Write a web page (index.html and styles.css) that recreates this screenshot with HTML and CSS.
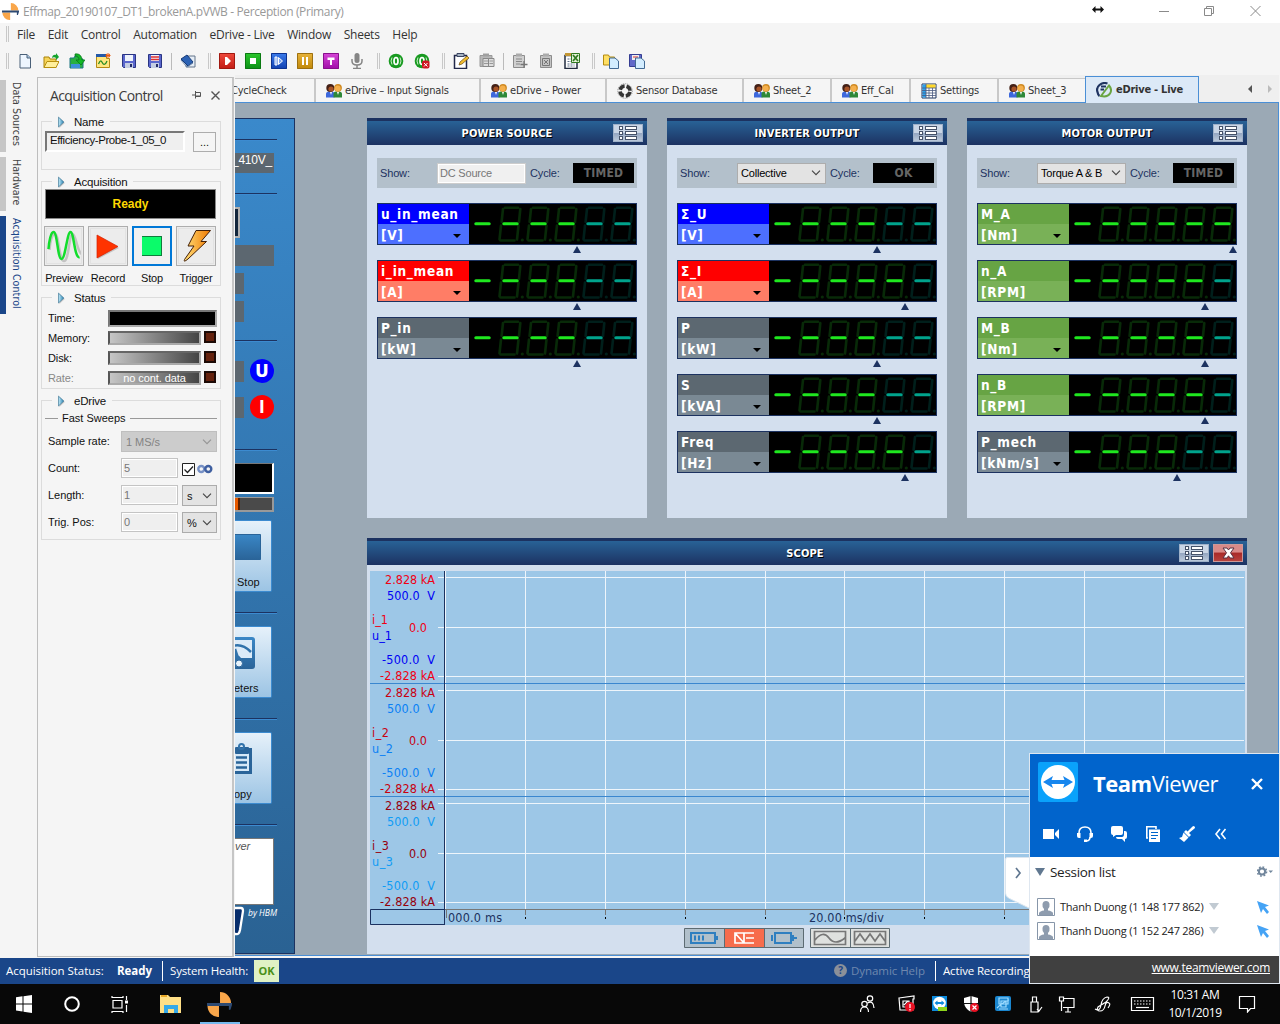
FILE: index.html
```html
<!DOCTYPE html>
<html lang="en">
<head>
<meta charset="utf-8">
<title>Effmap_20190107_DT1_brokenA.pVWB - Perception (Primary)</title>
<link rel="stylesheet" href="styles.css">
</head>
<body>
<svg class="sprite" width="0" height="0">
  <defs>
    <linearGradient id="play" x1="0" x2="1"><stop offset="0" stop-color="#c4ecfa"/><stop offset="1" stop-color="#2580b0"/></linearGradient>
    <linearGradient id="bolt" x1="0" x2="1"><stop offset="0" stop-color="#ffe07a"/><stop offset="1" stop-color="#f07800"/></linearGradient>
    <linearGradient id="ink" x1="0" y1="0" x2="0" y2="1"><stop offset="0" stop-color="#3a87c6"/><stop offset="1" stop-color="#2a6499"/></linearGradient>
  </defs>
  <symbol id="logo" viewBox="0 0 24 24"><path d="M12.500 0a10.500 10.500 0 0 1 10.500 10.500H12.500zM11.500 24A10.500 10.500 0 0 1 .5 13.500H11.500z" fill="#f9a64a"/><path d="M0 10.500h24v2L22.500 17H21v-3.500H0z" fill="#2d4a73"/></symbol>
  <symbol id="page" viewBox="0 0 16 16"><path d="M3 1.500h7l3.500 3.500v10H3z" fill="#eef6ff" stroke="#4a6078"/><path d="M10 1.500V5h3.500" fill="#a9c7e4" stroke="#4a6078"/></symbol>
  <symbol id="folder" viewBox="0 0 16 16"><path d="M1 14.500V4h5l1 2h6v8.500z" fill="#f6d458" stroke="#a98208"/><path d="M1 14.500L4 8.500h12l-3 6z" fill="#ffef9c" stroke="#b8900f"/><path d="M9 5c0-3 3-4 4-3V0l3 4-3 3V5c-1-1-3-1-4 0z" fill="#14a32c"/></symbol>
  <symbol id="import" viewBox="0 0 16 16"><path d="M1 15V5h4l1-2h5l1 3h2v9z" fill="#28b040" stroke="#1c7480"/><path d="M6 1c5-1 7 3 7 6h3l-4 5-5-5h3c0-3-2-4-4-4z" fill="#12b824" stroke="#087018" stroke-width=".7"/><path d="M2 11h9v4H2z" fill="#3d90d8"/></symbol>
  <symbol id="wavefolder" viewBox="0 0 16 16"><path d="M1.500 1.500h10v4h3v9h-13z" fill="#ffe680" stroke="#b58a14"/><path d="M1 1h10v3H1z" fill="#2459a8"/><path d="M3.500 11c2-5 3-3 4-1s3 2 4.500-2" fill="none" stroke="#278b25" stroke-width="1.300"/><path d="M13 0v5M10.500 2.500h5M11 1l4 3M15 1l-4 3" stroke="#e85a10"/></symbol>
  <symbol id="save" viewBox="0 0 16 16"><path d="M1.500 1.500h13v13h-12l-1-1z" fill="#5a66cc" stroke="#293483"/><path d="M4 2h8v6H4z" fill="#eef3fb"/><path d="M4 10h8v5H4z" fill="#c4cde2"/><path d="M9 11h2v3H9z" fill="#222b66"/></symbol>
  <symbol id="saveas" viewBox="0 0 16 16"><use href="#save"/><path d="M4 4h8M4 6.500h8" stroke="#e23131" stroke-width="1.300"/></symbol>
  <symbol id="book" viewBox="0 0 16 16"><path d="M7 3h8v11H6z" fill="#e6edf5" stroke="#62758a"/><path d="M1 6l6-4 6 7-5 4z" fill="#2c62b4" stroke="#163a78"/><path d="M1 7l6 7 6-4" fill="none" stroke="#6382ad"/></symbol>
  <symbol id="bplay" viewBox="0 0 16 16"><path d="M6 4h2l4 4-4 4H6z" fill="#fff"/></symbol>
  <symbol id="bstop" viewBox="0 0 16 16"><path d="M5 5h6v6H5z" fill="#fff"/></symbol>
  <symbol id="bstep" viewBox="0 0 16 16"><path d="M4 4h2v8H4zM7.500 4.500l4 3.500-4 3.500z" fill="#7ba4ee" stroke="#fff"/></symbol>
  <symbol id="bpause" viewBox="0 0 16 16"><path d="M5 4h2v8H5zM9 4h2v8H9z" fill="#fff"/></symbol>
  <symbol id="btrig" viewBox="0 0 16 16"><path d="M4.500 4.500h7V7H9v5H7V7H4.500z" fill="#fff"/></symbol>
  <symbol id="mic" viewBox="0 0 16 16"><rect x="5.500" y="0" width="5" height="10" rx="2.500" fill="#858585"/><path d="M3 6v2q0 4 5 4t5-4V6M8 12v3M4 15.500h8" fill="none" stroke="#858585" stroke-width="1.500"/></symbol>
  <symbol id="zero" viewBox="0 0 16 16"><circle cx="8" cy="8" r="7.300" fill="#189a20"/><ellipse cx="8" cy="8" rx="2" ry="3.500" fill="none" stroke="#fff" stroke-width="1.700"/><path d="M4 4.500Q2 8 4 11.500M12 4.500q2 3.500 0 7" stroke="#c8efc8" fill="none"/></symbol>
  <symbol id="zerox" viewBox="0 0 16 16"><use href="#zero"/><rect x="8" y="7.500" width="7.500" height="8" rx="2" fill="#cf1522"/><path d="M10 10l3.500 3.500M13.500 10L10 13.500" stroke="#fff"/></symbol>
  <symbol id="clipedit" viewBox="0 0 16 16"><path d="M1.500 2.500h12v13h-12z" fill="#fff" stroke="#22284a" stroke-width="1.500"/><path d="M4 .5h7v3H4z" fill="#a5b2c2" stroke="#3a4460"/><path d="M6 12l1-3 7-6 2 2-7 6z" fill="#f2bd30" stroke="#6a4a10" stroke-width=".7"/></symbol>
  <symbol id="clipgrey" viewBox="0 0 16 16"><path d="M1.500 2.500h11v12h-11z" fill="#d0d0d0" stroke="#8c8c8c"/><path d="M4 .5h6v3H4z" fill="#ababab"/><path d="M4 6h6M4 8.500h6M4 11h4" stroke="#888"/></symbol>
  <symbol id="clipbook" viewBox="0 0 16 16"><path d="M1 2.500h12v11H1z" fill="#b7b7b7" stroke="#999"/><path d="M4 .5h6v3H4z" fill="#a0a0a0"/><path d="M4 5.500h5.500v8H4zM9.500 5.500H15v8H9.500z" fill="#ddd" stroke="#888"/><path d="M5 8h4M10.500 8H14M5 10.500h4M10.500 10.500H14" stroke="#999"/></symbol>
  <symbol id="clipplus" viewBox="0 0 16 16"><use href="#clipgrey"/><path d="M12 8v7M8.500 11.500h7" stroke="#777" stroke-width="1.300"/></symbol>
  <symbol id="clipx" viewBox="0 0 16 16"><path d="M2.500 2.500h11v12h-11z" fill="#c4c4c4" stroke="#8c8c8c"/><path d="M5 .5h6v3H5z" fill="#ababab"/><path d="M4.500 5.500h7v7h-7zM6 7l4 4M10 7l-4 4" fill="none" stroke="#777"/></symbol>
  <symbol id="clipxls" viewBox="0 0 16 16"><path d="M1 2.500h12v13H1z" fill="#fff" stroke="#222c40" stroke-width="1.500"/><path d="M1 0h9v3H1z" fill="#c39735"/><path d="M3.500 6h7M3.500 8.500h7M3.500 11h7M3.500 13h7" stroke="#5f708a" stroke-dasharray="2 1"/><path d="M7.500.500h8v9h-8z" fill="#e3f2d7" stroke="#317a20"/><path d="M9 2l5 6M14 2L9 8" stroke="#317a20" stroke-width="1.700"/></symbol>
  <symbol id="copyfolder" viewBox="0 0 16 16"><path d="M.5 12V2h5l1 2h5v8z" fill="#ffdf63" stroke="#b48b10"/><path d="M6.500 5h5.500l3.500 3v7.500h-9z" fill="#d3edff" stroke="#426a94"/></symbol>
  <symbol id="copysave" viewBox="0 0 16 16"><path d="M.5 1.500h12v12H.5z" fill="#6069c9" stroke="#353d92"/><path d="M3 2h7v5H3z" fill="#eee"/><path d="M4 4h5" stroke="#d33"/><path d="M6.500 5h5.500l3.500 3v7.500h-9z" fill="#d3edff" stroke="#426a94"/></symbol>
  <symbol id="people" viewBox="0 0 16 16"><path d="M0 14.500V11q0-2.500 3-2.500h2.500q3 0 3 3v3z" fill="#3d68dc"/><path d="M7.500 14.500V11q0-2.500 2.500-2.500h3q3 0 3 2.500v3.500z" fill="#2e8838"/><circle cx="4.300" cy="5" r="4" fill="#432016"/><circle cx="5" cy="6" r="2.600" fill="#a85428"/><circle cx="12" cy="4.800" r="3.900" fill="#cf8a23"/><circle cx="11.700" cy="5.500" r="2.900" fill="#f5b04c"/><path d="M4 9l1 3 1-3M11 9l1 3 1-3" fill="#fff"/></symbol>
  <symbol id="ring" viewBox="0 0 16 16"><circle cx="8" cy="8" r="5" fill="none" stroke="#333" stroke-width="3.600" stroke-dasharray="5.850 2" stroke-dashoffset="-1"/><circle cx="8" cy="8" r="7.300" fill="none" stroke="#777" stroke-width=".8" stroke-dasharray="1 1"/></symbol>
  <symbol id="grid" viewBox="0 0 16 16"><path d="M1 1h14v14H1z" fill="#fff" stroke="#1d355f"/><path d="M1.500 1.500H5v13H1.500z" fill="#2aa3ef"/><path d="M5 1.500h9.500V5H5z" fill="#ffd82a"/><path d="M5 1v14M8 5v10M11.500 5v10M1 5h14M1 7.500h14M1 10h14M1 12.500h14" stroke="#4a5a80" stroke-width=".8"/></symbol>
  <symbol id="edrive" viewBox="0 0 16 16"><path d="M11.500 1.500Q7 0 3.500 3T1.500 10q.5 3 2 4M4.500 7.500H8M5 4.500h5" fill="none" stroke="#1f3461" stroke-width="2.200"/><path d="M5 14L13 3.500q3.500 4 1 8T5 14z" fill="#dce9f7" stroke="#6aa543" stroke-width="2"/></symbol>
  <symbol id="list" viewBox="0 0 30 18"><g fill="#fff" stroke="#46536a"><rect x="6.500" y="2.500" width="3" height="3"/><rect x="12.500" y="2.500" width="11" height="3"/><rect x="6.500" y="7.500" width="3" height="3"/><rect x="12.500" y="7.500" width="11" height="3"/><rect x="6.500" y="12.500" width="3" height="3"/><rect x="12.500" y="12.500" width="11" height="3"/></g></symbol>
  <symbol id="chev" viewBox="0 0 10 6"><path d="M1 .7l4 4 4-4" fill="none" stroke="#444" stroke-width="1.100"/></symbol>
  <symbol id="mark" viewBox="0 0 10 14"><path d="M1.500 2l6 5.500-6 5.500z" fill="#999" opacity=".5"/><path d="M.5 1l6 5.500-6 5.500z" fill="url(#play)" stroke="#3f7795" stroke-width=".8"/></symbol>
  <symbol id="digit" viewBox="0 0 28 40" overflow="visible"><path d="M8 3.700h13M3.500 36.500H17.500M23.300 5l-1.300 13M21.500 21.500l-1.500 14M2.500 35.500L4 21.500M4.600 18L6 5" fill="none" stroke="currentColor" stroke-width="2.600" stroke-linecap="round"/><circle cx="25.300" cy="36" r="1.600" fill="currentColor"/></symbol>
  <symbol id="dash" viewBox="0 0 28 40"><path d="M6.800 19.700h13.400" stroke="currentColor" stroke-width="3" stroke-linecap="round"/></symbol>
  <symbol id="lcd3" viewBox="0 0 167 40">
    <g color="#082a08"><use href="#digit" x="28" width="28" height="40"/><use href="#digit" x="56" width="28" height="40"/><use href="#digit" x="84" width="28" height="40"/></g>
    <g color="#001f1b"><use href="#digit" x="112" width="28" height="40"/><use href="#digit" x="140" width="28" height="40"/></g>
    <g color="#1fe81f"><use href="#dash" width="28" height="40"/><use href="#dash" x="28" width="28" height="40"/><use href="#dash" x="56" width="28" height="40"/><use href="#dash" x="84" width="28" height="40"/></g>
    <g color="#00a38c"><use href="#dash" x="112" width="28" height="40"/><use href="#dash" x="140" width="28" height="40"/></g>
  </symbol>
  <symbol id="lcd4" viewBox="0 0 167 40">
    <g color="#082a08"><use href="#digit" x="28" width="28" height="40"/><use href="#digit" x="56" width="28" height="40"/><use href="#digit" x="84" width="28" height="40"/><use href="#digit" x="112" width="28" height="40"/></g>
    <g color="#001f1b"><use href="#digit" x="140" width="28" height="40"/></g>
    <g color="#1fe81f"><use href="#dash" width="28" height="40"/><use href="#dash" x="28" width="28" height="40"/><use href="#dash" x="56" width="28" height="40"/><use href="#dash" x="84" width="28" height="40"/><use href="#dash" x="112" width="28" height="40"/></g>
    <g color="#00a38c"><use href="#dash" x="140" width="28" height="40"/></g>
  </symbol>
  <symbol id="lcd5" viewBox="0 0 167 40">
    <g color="#082a08"><use href="#digit" x="28" width="28" height="40"/><use href="#digit" x="56" width="28" height="40"/><use href="#digit" x="84" width="28" height="40"/><use href="#digit" x="112" width="28" height="40"/><use href="#digit" x="140" width="28" height="40"/></g>
    <g color="#1fe81f"><use href="#dash" width="28" height="40"/><use href="#dash" x="28" width="28" height="40"/><use href="#dash" x="56" width="28" height="40"/><use href="#dash" x="84" width="28" height="40"/><use href="#dash" x="112" width="28" height="40"/><use href="#dash" x="140" width="28" height="40"/></g>
  </symbol>
  <symbol id="user" viewBox="0 0 18 18"><path d="M.5.5h17v17H.5z" fill="#fff" stroke="#8796a9"/><path d="M2 17v-2q1-2 5-2.500V11Q5 9 5.500 6 6 3 9 3t3.500 3q.5 3-1.500 5v1.500q4 .5 5 2.500v2z" fill="#8e9cae"/></symbol>
  <symbol id="cursor" viewBox="0 0 12 13"><path d="M0 0l12 4.500L8 6l4 5-2 2-4-5-2 4z" fill="#45a3f5"/></symbol>
</svg>

<div class="screen">
  <header class="titlebar">
    <svg class="app" width="17" height="17"><use href="#logo"/></svg>
    <span class="title">Effmap_20190107_DT1_brokenA.pVWB - Perception (Primary)</span>
    <svg class="resize" width="12" height="9" viewBox="0 0 12 9"><path d="M0 4.500L3.500 1v2.500h5V1L12 4.500 8.500 8V5.500h-5V8z" fill="#111"/></svg>
    <svg class="winbtns" width="104" height="12" viewBox="0 0 104 12" fill="none" stroke="#8a8a8a"><path d="M1 6.500h10M46.500 3.500h7v7h-7zM48.500 3.500v-2h7v7h-2M92.500 1l10 10M102.500 1l-10 10"/></svg>
  </header>

  <nav class="menubar"><i class="grip"></i><span>File</span><span>Edit</span><span>Control</span><span>Automation</span><span>eDrive - Live</span><span>Window</span><span>Sheets</span><span>Help</span></nav>

  <div class="toolbar">
    <i class="grip"></i>
    <svg><use href="#page"/></svg><svg><use href="#folder"/></svg><svg><use href="#import"/></svg><svg><use href="#wavefolder"/></svg><svg><use href="#save"/></svg><svg><use href="#saveas"/></svg>
    <i class="sep"></i><svg><use href="#book"/></svg>
    <i class="grip"></i>
    <svg class="key red"><use href="#bplay"/></svg><svg class="key green"><use href="#bstop"/></svg><svg class="key blue"><use href="#bstep"/></svg><svg class="key amber"><use href="#bpause"/></svg><svg class="key magenta"><use href="#btrig"/></svg><svg><use href="#mic"/></svg>
    <i class="grip"></i>
    <svg><use href="#zero"/></svg><svg><use href="#zerox"/></svg>
    <i class="grip"></i>
    <svg><use href="#clipedit"/></svg><svg><use href="#clipbook"/></svg><i class="sep"></i><svg><use href="#clipplus"/></svg><svg><use href="#clipx"/></svg><svg><use href="#clipxls"/></svg>
    <i class="grip"></i>
    <svg><use href="#copyfolder"/></svg><svg><use href="#copysave"/></svg>
  </div>

  <div class="body">
    <aside class="docktabs"><span class="d1">Data Sources</span><span class="d2">Hardware</span><span class="d3 on">Acquisition Control</span></aside>

    <section class="acq">
      <div class="acqhead"><h1>Acquisition Control</h1>
        <svg width="9" height="8" viewBox="0 0 9 8"><path d="M0 4h3M3.500 0v7.500M3.500 1.500h5v4h-5M4 5h4" fill="none" stroke="#555"/></svg>
        <svg width="9" height="9" viewBox="0 0 9 9"><path d="M.5.5l8 8M8.500.500l-8 8" stroke="#555" stroke-width="1.400"/></svg>
      </div>

      <div class="group g-name"><h2><svg><use href="#mark"/></svg>Name</h2>
        <div class="namerow"><div class="namebox">Efficiency-Probe-1_05_0</div><div class="dots">...</div></div>
      </div>

      <div class="group g-acq"><h2><svg><use href="#mark"/></svg>Acquisition</h2>
        <div class="ready">Ready</div>
        <div class="acts">
          <div><b><svg width="34" height="34" viewBox="0 0 34 34"><path d="M1.500 20C2 12 4 4 7 4c4 0 4 27 9 27S21 4 24.500 4s4 16 9 20" fill="none" stroke="#888" stroke-width="2.500" opacity=".4" transform="translate(1 1)"/><path d="M1.500 20C2 12 4 3 6.500 3c4 0 4 27 8 27S20 3 23.500 3s4 27 9 25" fill="none" stroke="#12dd2c" stroke-width="2.500"/></svg></b>Preview</div>
          <div><b><svg width="34" height="34" viewBox="0 0 34 34"><path d="M7 7l21 12L7 30z" fill="#aaa" opacity=".6"/><path d="M6 6l21 11.500L6 29z" fill="#ff3300" stroke="#d42000" stroke-width=".7"/></svg></b>Record</div>
          <div><b class="focus"><svg width="34" height="34" viewBox="0 0 34 34"><path d="M7 7h20v20H7z" fill="#0f7d3c"/><path d="M7 8h19v18H7z" fill="#0bfb6a"/></svg></b>Stop</div>
          <div><b><svg width="34" height="34" viewBox="0 0 34 34"><path d="M17 1.500h14.500L22 12.500h5.500L9 30q-5 4-3.500.5L15 17H9z" fill="url(#bolt)" stroke="#442008"/></svg></b>Trigger</div>
        </div>
      </div>

      <div class="group g-status"><h2><svg><use href="#mark"/></svg>Status</h2>
        <div class="srow"><label>Time:</label><div class="time"></div></div>
        <div class="srow"><label>Memory:</label><div class="bar"></div><i class="led"></i></div>
        <div class="srow"><label>Disk:</label><div class="bar"></div><i class="led"></i></div>
        <div class="srow off"><label>Rate:</label><div class="bar">no cont. data</div><i class="led"></i></div>
      </div>

      <div class="group g-edrive"><h2><svg><use href="#mark"/></svg>eDrive</h2>
        <div class="sweeps"><span>Fast Sweeps</span></div>
        <div class="erow"><label>Sample rate:</label><div class="combo wide">1 MS/s<svg width="10" height="6" opacity=".4"><use href="#chev"/></svg></div></div>
        <div class="erow"><label>Count:</label><div class="field">5</div><svg class="check" width="13" height="13" viewBox="0 0 13 13"><path d="M.5.500h12v12H.5z" fill="#fff" stroke="#222"/><path d="M2.500 6.500l3 3 5.500-6" fill="none" stroke="#222" stroke-width="1.300"/></svg><svg width="16" height="12" viewBox="0 0 16 12"><circle cx="4.300" cy="6" r="3" fill="none" stroke="#7690c5" stroke-width="2.400"/><circle cx="11.300" cy="6" r="3" fill="none" stroke="#3f5fa0" stroke-width="2.400"/></svg></div>
        <div class="erow"><label>Length:</label><div class="field">1</div><div class="combo">s<svg width="10" height="6"><use href="#chev"/></svg></div></div>
        <div class="erow"><label>Trig. Pos:</label><div class="field">0</div><div class="combo">%<svg width="10" height="6"><use href="#chev"/></svg></div></div>
      </div>
    </section>

    <main class="work">
      <div class="tabs">
        <span class="t1">CycleCheck</span>
        <span class="t2"><svg><use href="#people"/></svg>eDrive – Input Signals</span>
        <span class="t3"><svg><use href="#people"/></svg>eDrive – Power</span>
        <span class="t4"><svg><use href="#ring"/></svg>Sensor Database</span>
        <span class="t5"><svg><use href="#people"/></svg>Sheet_2</span>
        <span class="t6"><svg><use href="#people"/></svg>Eff_Cal</span>
        <span class="t7"><svg><use href="#grid"/></svg>Settings</span>
        <span class="t8"><svg><use href="#people"/></svg>Sheet_3</span>
        <span class="t9"><svg><use href="#edrive"/></svg>eDrive - Live</span>
        <svg class="arrows" width="24" height="8" viewBox="0 0 24 8"><path d="M4 0v8L0 4z" fill="#555"/><path d="M20 0v8l4-4z" fill="#bbb"/></svg>
      </div>

      <div class="canvas">
        <div class="strip">
          <hr class="h1">
          <div class="slab volt">_410V_</div>
          <hr class="h2">
          <div class="lcdbit"></div>
          <div class="slab s1"></div>
          <div class="slab short s2"></div>
          <div class="slab short s3"></div>
          <hr class="h3">
          <div class="ui"><div class="slab short"></div><span class="dot u">U</span></div>
          <div class="ui"><div class="slab short"></div><span class="dot i">I</span></div>
          <hr class="h4">
          <div class="blackbox"></div>
          <div class="slider"><i></i></div>
          <div class="bigbtn b1"><svg width="37" height="52" viewBox="0 0 37 52"><path d="M-1 13.500h26.500v25H-1z" fill="url(#ink)" stroke="#2a6499"/></svg><span>Stop</span></div>
          <hr class="h5">
          <div class="bigbtn b2"><svg width="37" height="52" viewBox="0 0 37 52"><rect x="-12" y="10" width="32" height="32" rx="3" fill="url(#ink)"/><path d="M-9 13h26v18H6q-1-2-4-3l-4-7z" fill="#dcebf8"/><path d="M-2 19q9-3 18 6M0 22l4 12" fill="none" stroke="#3273ab" stroke-width="2.500"/><circle cx="4" cy="36.500" r="3.500" fill="#e6f2fb" stroke="#2a6499"/></svg><span>eters</span></div>
          <hr class="h6">
          <div class="bigbtn b3"><svg width="37" height="52" viewBox="0 0 37 52"><path d="M-9 16.500h24.500v23H-9z" fill="#d6e8f7" stroke="#2a6499" stroke-width="3"/><rect x="0" y="14" width="14" height="7" rx="1" fill="#2a6499"/><circle cx="6.500" cy="13.500" r="2.500" fill="none" stroke="#3273ab" stroke-width="2"/><path d="M1 24.500h11M1 29.500h11M1 34.500h11" stroke="#2a6499" stroke-width="2.300"/></svg><span>opy</span></div>
          <hr class="h7">
          <div class="note">ver</div>
          <div class="hbm"><svg width="12" height="34" viewBox="0 0 12 34"><path d="M-5 3H6q2 0 2 3L5 25q-1 5-4 4h-6z" fill="#062c6b" stroke="#fff" stroke-width="2.300"/></svg><em>by HBM</em></div>
        </div>

        <div class="board">
          <section class="card">
            <header><b>POWER SOURCE</b><svg class="listbtn"><use href="#list"/></svg></header>
            <div class="show"><label>Show:</label><div class="pick ro">DC Source</div><label class="cy">Cycle:</label><div class="cyc">TIMED</div></div>
            <div class="meter blue"><div class="tag"><b>u_in_mean</b><b>[V]<i></i></b></div><svg><use href="#lcd3"/></svg></div><i class="pt p3"></i>
            <div class="meter red"><div class="tag"><b>i_in_mean</b><b>[A]<i></i></b></div><svg><use href="#lcd3"/></svg></div><i class="pt p3"></i>
            <div class="meter"><div class="tag"><b>P_in</b><b>[kW]<i></i></b></div><svg><use href="#lcd3"/></svg></div><i class="pt p3"></i>
          </section>
          <section class="card">
            <header><b>INVERTER OUTPUT</b><svg class="listbtn"><use href="#list"/></svg></header>
            <div class="show"><label>Show:</label><div class="pick">Collective<svg width="10" height="6"><use href="#chev"/></svg></div><label class="cy">Cycle:</label><div class="cyc">OK</div></div>
            <div class="meter blue"><div class="tag"><b>Σ_U</b><b>[V]<i></i></b></div><svg><use href="#lcd3"/></svg></div><i class="pt p3"></i>
            <div class="meter red"><div class="tag"><b>Σ_I</b><b>[A]<i></i></b></div><svg><use href="#lcd4"/></svg></div><i class="pt p4"></i>
            <div class="meter"><div class="tag"><b>P</b><b>[kW]<i></i></b></div><svg><use href="#lcd3"/></svg></div><i class="pt p3"></i>
            <div class="meter"><div class="tag"><b>S</b><b>[kVA]<i></i></b></div><svg><use href="#lcd3"/></svg></div><i class="pt p3"></i>
            <div class="meter"><div class="tag"><b>Freq</b><b>[Hz]<i></i></b></div><svg><use href="#lcd4"/></svg></div><i class="pt p4"></i>
          </section>
          <section class="card">
            <header><b>MOTOR OUTPUT</b><svg class="listbtn"><use href="#list"/></svg></header>
            <div class="show"><label>Show:</label><div class="pick">Torque A &amp; B<svg width="10" height="6"><use href="#chev"/></svg></div><label class="cy">Cycle:</label><div class="cyc">TIMED</div></div>
            <div class="meter green"><div class="tag"><b>M_A</b><b>[Nm]<i></i></b></div><svg><use href="#lcd5"/></svg></div><i class="pt p5"></i>
            <div class="meter green"><div class="tag"><b>n_A</b><b>[RPM]</b></div><svg><use href="#lcd4"/></svg></div><i class="pt p4"></i>
            <div class="meter green"><div class="tag"><b>M_B</b><b>[Nm]<i></i></b></div><svg><use href="#lcd4"/></svg></div><i class="pt p4"></i>
            <div class="meter green"><div class="tag"><b>n_B</b><b>[RPM]</b></div><svg><use href="#lcd4"/></svg></div><i class="pt p4"></i>
            <div class="meter"><div class="tag"><b>P_mech</b><b>[kNm/s]<i></i></b></div><svg><use href="#lcd3"/></svg></div><i class="pt p3"></i>
          </section>

          <section class="card scope">
            <header><b>SCOPE</b><svg class="listbtn"><use href="#list"/></svg><svg class="listbtn shut" viewBox="0 0 30 18"><path d="M10 4h4l1.500 2L17 4h4l-3.500 4.800L21 14h-4l-1.500-2.200L14 14h-4l3.500-5.200z" fill="#fff" stroke="#5a3040"/></svg></header>
            <svg class="plot" width="875" height="354" viewBox="0 0 875 354">
              <path d="M0 0h875v354H0z" fill="#9dc7e7"/>
              <path d="M155.500 0v338M235.500 0v338M315.500 0v338M395.500 0v338M474.500 0v338M554.500 0v338M634.500 0v338M714.500 0v338M794.500 0v338M75.500 0v338M68 6.500h806M68 56.500h806M68 105.500h806M68 119.500h806M68 169.500h806M68 218.500h806M68 232.500h806M68 282.500h806M68 331.500h806" stroke="#eef5fb" fill="none"/>
              <path d="M0 112.500h875M0 225.500h875" stroke="#3a87cf"/>
              <path d="M75 338.500h800M76.500 338v9M155.500 338v6M235.500 338v6M315.500 338v6M395.500 338v6M474.500 338v6M554.500 338v6M634.500 338v6" stroke="#777" fill="none"/>
              <path d="M155.500 346v2M235.500 346v2M315.500 346v2M395.500 346v2M474.500 346v2M554.500 346v2M634.500 346v2" stroke="#000"/>
              <path d="M74.500 0v354M.5 338.500h74v15H.5z" fill="none" stroke="#1c3260"/>
              <g class="ch1"><g class="amp"><text x="65" y="13" textLength="50" text-anchor="end">2.828 kA</text><text x="65" y="109" textLength="55" text-anchor="end">-2.828 kA</text><text x="57" y="61" textLength="18" text-anchor="end">0.0</text><text x="2" y="53" textLength="16">i_1</text></g><g class="vol"><text x="65" y="29" textLength="48" text-anchor="end" xml:space="preserve">500.0  V</text><text x="65" y="93" textLength="53" text-anchor="end" xml:space="preserve">-500.0  V</text><text x="2" y="69" textLength="20">u_1</text></g></g>
              <g class="ch2" transform="translate(0 113)"><g class="amp"><text x="65" y="13" textLength="50" text-anchor="end">2.828 kA</text><text x="65" y="109" textLength="55" text-anchor="end">-2.828 kA</text><text x="57" y="61" textLength="18" text-anchor="end">0.0</text><text x="2" y="53" textLength="17">i_2</text></g><g class="vol"><text x="65" y="29" textLength="48" text-anchor="end" xml:space="preserve">500.0  V</text><text x="65" y="93" textLength="53" text-anchor="end" xml:space="preserve">-500.0  V</text><text x="2" y="69" textLength="21">u_2</text></g></g>
              <g class="ch3" transform="translate(0 226)"><g class="amp"><text x="65" y="13" textLength="50" text-anchor="end">2.828 kA</text><text x="65" y="109" textLength="55" text-anchor="end">-2.828 kA</text><text x="57" y="61" textLength="18" text-anchor="end">0.0</text><text x="2" y="53" textLength="17">i_3</text></g><g class="vol"><text x="65" y="29" textLength="48" text-anchor="end" xml:space="preserve">500.0  V</text><text x="65" y="93" textLength="53" text-anchor="end" xml:space="preserve">-500.0  V</text><text x="2" y="69" textLength="21">u_3</text></g></g>
              <g fill="#1c3260"><text x="78" y="351" textLength="54">000.0 ms</text><text x="439" y="351" textLength="75">20.00 ms/div</text></g>
            </svg>
            <div class="modes">
              <svg width="120" height="20" viewBox="0 0 120 20"><path d="M.5.500h119v19H.5z" fill="#b1c0cb" stroke="#5c6b73"/><path d="M40 1h40v18H40z" fill="#f76c4c"/><path d="M40.500 0v20M80.500 0v20" stroke="#5c6b73"/><g fill="none" stroke="#2f7fc0" stroke-width="2"><path d="M7 5h24v10H7zM11 7.500v5M15 7.500v5M19 7.500v5M33 8v4"/><path d="M91 5h16v10H91zM88 7v6M109 7v6M108 10h5"/></g><g fill="none" stroke="#fff" stroke-width="1.700"><path d="M51 5h9v10h-9zM51 5l9 10M60.500 5H70M62 10h8M60.500 15H70"/></g></svg>
              <svg width="80" height="20" viewBox="0 0 80 20"><path d="M.5.500h79v19H.5zM40.500 0v20" fill="#dfe1df" stroke="#5c6b73"/><path d="M4.500 3.500h31v13h-31zM44.500 3.500h31v13h-31zM5 12q8-10 14-2t16 0M45 13l5-7 5 7 5-7 5 7 5-7 5 7" fill="none" stroke="#777" stroke-width="1.700"/></svg>
            </div>
          </section>
        </div>
      </div>
    </main>
  </div>

  <footer class="status"><span class="st1">Acquisition Status:</span><b class="st2">Ready</b><i></i><span class="st3">System Health:</span><b class="ok">OK</b><span class="q">?</span><span class="dyn">Dynamic Help</span><i></i><span class="rec">Active Recording</span></footer>

  <div class="taskbar">
    <svg width="240" height="40" viewBox="0 0 240 40">
      <path d="M16 13.300l6.500-1v7.200H16zM23.500 12.200l8.500-1.200v8.500h-8.500zM16 20.500h6.500v7L16 26.600zM23.500 20.500H32V29l-8.500-1.200z" fill="#fff"/>
      <circle cx="72" cy="20" r="6.800" fill="none" stroke="#fff" stroke-width="2"/>
      <path d="M113 16.500h9v7.500h-9zM112 13.500h11M112 27.500h11M112 12v2M123 12v2M112 29v-2M123 29v-2M126.500 12v4M126.500 21v7" fill="none" stroke="#fff" stroke-width="1.200"/><path d="M125 16.500h3v3h-3z" fill="#fff"/>
      <path d="M160 11h8l2 2h11v16h-21z" fill="#ffdf86"/><path d="M161 11h6v2h-6z" fill="#e9a928"/><path d="M164 29v-8h14v8h-4v-4h-6v4z" fill="#35a9e8"/>
      <svg x="207" y="8" width="25" height="25"><use href="#logo"/></svg>
      <path d="M200 38h40v2h-40z" fill="#76b9ed"/>
    </svg>
    <svg class="tray" width="300" height="40" viewBox="860 0 300 40" fill="none" stroke="#fff" stroke-width="1.200">
      <circle cx="864.500" cy="20" r="2.700"/><path d="M860.500 28q0-5 4-5t4 5"/><circle cx="870" cy="14.500" r="2.700"/><path d="M867.500 19q6-3 6.500 5"/>
      <path d="M899 14l15-2v3h-1v11h-13zM903 17h6v6h-6zM904 21l4-4"/><circle cx="910" cy="23" r="5" fill="#e81123" stroke="none"/><path d="M910 20v4M910 25v1.500"/>
      <rect x="932" y="12" width="15" height="15" fill="#0d8bdd" stroke="none"/><circle cx="939.500" cy="19" r="6.300" fill="#fff" stroke="none"/><path d="M934.500 19l3-2.500v1.500h4v-1.500l3 2.500-3 2.500V20h-4v1.500z" fill="#0d8bdd" stroke="none"/><path d="M938 23h9v4h-9z" fill="#8ed51b" stroke="none"/>
      <path d="M964 14l7-2 7 2v5q-1 6-7 9-6-3-7-9z" fill="#fff" stroke="none"/><path d="M971 12v16M964 19.500h14" stroke="#111"/><circle cx="974.500" cy="23.500" r="4.500" fill="#e81123" stroke="none"/><path d="M972.500 21.500l4 4M976.500 21.500l-4 4"/>
      <rect x="995" y="12" width="16" height="15" rx="2" fill="#1a86cf" stroke="none"/><path d="M999 14h9v6h-9zM1001 17h5v6h-5zM997 24q6-6 12-8M999 25h9" stroke="#9fdcff"/>
      <path d="M1031 18h7v10h-7zM1032.500 18v-5h4v5M1037 25l2 2 3-4" />
      <path d="M1064 14.500h10v9h-11M1065 28h6M1068 24v4M1059.500 13h4v4h-4zM1061.500 17v10"/>
      <path d="M1095 25q5 3 6-4t6-8q4 0-1 5l-8 5q-2 4 2 4t5-5 4-3q2 1-1 5"/>
      <path d="M1131.500 13.500h22v13h-22z"/><path d="M1134 17h17M1134 20h17" stroke-dasharray="1.500 1.500"/><path d="M1136 23.500h13"/>
    </svg>
    <div class="clock"><span>10:31 AM</span><span>10/1/2019</span></div>
    <svg class="note-ico" width="18" height="18" viewBox="0 0 18 18"><path d="M1.500 1.500h15v12h-4l-3 3.500v-3.500h-8z" fill="none" stroke="#fff" stroke-width="1.200"/></svg>
  </div>

  <svg class="flyout" width="26" height="53" viewBox="0 0 26 53"><path d="M26 .5H2Q.5.500.5 3v33q0 3 3 5l22.500 11z" fill="#fff" stroke="#dbe5ee"/><path d="M11 11l4 5-4 5" fill="none" stroke="#5f7690" stroke-width="1.700"/></svg>
  <aside class="tv">
    <div class="tvtop">
      <svg width="40" height="40" viewBox="0 0 40 40"><rect width="40" height="40" rx="2" fill="#0aa2fb"/><circle cx="20" cy="20" r="17" fill="#fff"/><path d="M5 20l10-6-1.500 4h13L25 14l10 6-10 6 1.500-4h-13l1.500 4z" fill="#1686ee"/></svg>
      <span class="brand"><b>Team</b>Viewer</span>
      <svg width="12" height="12" viewBox="0 0 12 12"><path d="M1 1l10 10M11 1L1 11" stroke="#fff" stroke-width="2.400"/></svg>
    </div>
    <div class="tvtools">
      <svg viewBox="0 0 16 16"><path d="M0 3h11v10H0zM12 7l4-4v10l-4-4z" fill="#fff"/></svg>
      <svg viewBox="0 0 16 16"><path d="M2 9V7q0-6 6-6t6 6v2M13 11q0 4-4 4" fill="none" stroke="#fff" stroke-width="1.600"/><path d="M0 7h3.500v5H2q-2 0-2-2zM16 7h-3.500v5H14q2 0 2-2zM7 13.500h3v2.500H7z" fill="#fff"/></svg>
      <svg viewBox="0 0 16 16"><path d="M2 0h8q2 0 2 2v5q0 2-2 2H5l-3 2V9Q0 9 0 7V2q0-2 2-2z" fill="#fff"/><path d="M13 5h1q2 0 2 2v4q0 2-2 2v3l-3-3H7q-2 0-2-2h6q2 0 2-3z" fill="#fff"/></svg>
      <svg viewBox="0 0 16 16"><path d="M3 12H1.800V.8H11V3" fill="none" stroke="#fff" stroke-width="1.600"/><path d="M4 3.500h11V16H4z" fill="#fff"/><path d="M6 6.500h7M6 9.500h7M6 12.500h5" stroke="#06c" stroke-width="1.200"/></svg>
      <svg viewBox="0 0 16 16"><path d="M15.500.500q1 1 0 2L10 7l2 2-2 2-5-5 2-2 1.500 1.500 5-5q1-1 2 0zM4.500 6.500l5 5L5 16l-5-4 3-1z" fill="#fff"/></svg>
      <svg viewBox="0 0 16 16"><path d="M7 3L3 8l4 5M12.500 3l-4 5 4 5" fill="none" stroke="#fff" stroke-width="1.600"/></svg>
    </div>
    <div class="tvlist">
      <div class="tvhead"><svg width="10" height="8" viewBox="0 0 10 8"><path d="M0 0h10L5 8z" fill="#617890"/></svg><span>Session list</span><svg class="gear" width="16" height="11" viewBox="0 0 16 11"><circle cx="5" cy="5.500" r="3.100" fill="none" stroke="#71869c" stroke-width="2"/><circle cx="5" cy="5.500" r="4.600" fill="none" stroke="#71869c" stroke-width="1.500" stroke-dasharray="1.800 1.800"/><path d="M11.500 4.500H16L13.700 7z" fill="#71869c"/></svg></div>
      <div class="tvrow"><svg width="18" height="18"><use href="#user"/></svg><span>Thanh Duong (1 148 177 862)</span><svg width="10" height="7" viewBox="0 0 10 7"><path d="M0 0h10L5 7z" fill="#c1cad2"/></svg><svg class="cur" width="12" height="13"><use href="#cursor"/></svg></div>
      <div class="tvrow"><svg width="18" height="18"><use href="#user"/></svg><span>Thanh Duong (1 152 247 286)</span><svg width="10" height="7" viewBox="0 0 10 7"><path d="M0 0h10L5 7z" fill="#c1cad2"/></svg><svg class="cur" width="12" height="13"><use href="#cursor"/></svg></div>
    </div>
    <div class="tvfoot"><u>www.teamviewer.com</u></div>
  </aside>
</div>
</body>
</html>
```
FILE: styles.css
```css
* { box-sizing: border-box; }
body { margin: 0; overflow: hidden; font-family: "Liberation Sans", sans-serif; font-size: 11px; }
h1, h2, hr { margin: 0; font-weight: normal; border: 0; }
i { font-style: normal; display: block; }
svg { display: block; flex: none; }
.sprite { position: absolute; }
.screen { position: relative; width: 1280px; height: 1024px; display: flex; flex-direction: column; background: #f5f5f5; overflow: hidden; white-space: nowrap; }

/* window chrome */
.titlebar { height: 23px; flex: none; background: #fff; display: flex; align-items: center; padding-left: 2px; font-family: "Open Sans", sans-serif; font-size: 12px; color: #999; }
.title { width: 330px; margin-left: 4px; letter-spacing: -0.38px; }
.resize { margin-left: 739px; margin-top: -5px; }
.winbtns { margin-left: 54px; margin-top: -2px; }
.menubar { height: 24px; flex: none; display: flex; align-items: center; padding: 0 0 2px 6px; font-family: "Open Sans", sans-serif; font-size: 12px; color: #333; letter-spacing: -0.25px; }
.menubar span { margin-right: 12.700px; }
.grip { width: 3px; height: 16px; flex: none; border: solid #c8c8c8; border-width: 0 1px; }
.menubar .grip { margin-right: 8px; }
.toolbar { height: 28px; flex: none; display: flex; align-items: center; gap: 10px; padding-left: 6px; }
.toolbar svg { width: 16px; height: 16px; }
.toolbar .grip { margin: 0 -2px 0 2px; }
.toolbar .grip:first-child { margin: 0 -2px 0 0; }
.toolbar .sep { width: 1px; height: 17px; background: #bbb; margin: 0 -2px; }
.key { border-radius: 1px; }
.key.red { background: linear-gradient(#f04a3c, #c01c14); box-shadow: inset 0 0 0 1px #a01810; }
.key.green { background: linear-gradient(#2cc82c, #0a9016); box-shadow: inset 0 0 0 1px #0a7812; }
.key.blue { background: linear-gradient(#3c7cec, #1040b0); box-shadow: inset 0 0 0 1px #0c3290; }
.key.amber { background: linear-gradient(#e8b43c, #c08808); box-shadow: inset 0 0 0 1px #9c7010; }
.key.magenta { background: linear-gradient(#d848d8, #a00ca8); box-shadow: inset 0 0 0 1px #88108c; }

.body { height: 883px; flex: none; display: flex; }
.docktabs { width: 37px; padding-top: 5px; display: flex; flex-direction: column; gap: 5px; font-family: "DejaVu Sans Condensed", sans-serif; font-size: 10.500px; color: #444; }
.docktabs span { writing-mode: vertical-rl; border-left: 6px solid #c6c6c6; width: 26px; padding-top: 2px; line-height: 19px; letter-spacing: 0.1px; }
.d1 { height: 72px; }
.d2 { height: 54px; }
.d3 { height: 98px; }
.docktabs .on { border-color: #1a4689; color: #1a4689; }

/* acquisition panel */
.acq { position: relative; z-index: 1; width: 197px; height: 880px; flex: none; margin-top: 2px; border: 1px solid #bdbdbd; border-right: 2px solid #c6c6c6; background: #f5f5f5; padding-left: 3px; color: #111; }
.work { flex: 1; margin-left: 1px; min-width: 0; }
.acqhead { height: 43px; display: flex; align-items: center; padding: 0 0 9px 9px; }
.acqhead h1 { font-family: "Open Sans", sans-serif; font-size: 14px; color: #3c3c3c; width: 142px; letter-spacing: -0.6px; }
.acqhead svg + svg { margin-left: 10px; }
.group { width: 180px; border: 1px solid #dcdcdc; margin-bottom: 11px; padding-left: 3px; font-size: 11px; }
.group h2 { float: left; display: flex; align-items: center; height: 14px; margin: -7px 0 0 7px; padding: 0 6px; background: #f5f5f5; font-size: 11.500px; letter-spacing: -0.2px; }
.group h2 svg { width: 9px; height: 13px; margin-right: 7px; }
.group h2 + * { clear: left; }
.g-name { height: 49px; }
.g-acq { height: 105px; }
.g-status { height: 92px; }
.g-edrive { height: 140px; }
.namerow { display: flex; gap: 8px; padding-top: 2px; }
.namebox { width: 140px; height: 21px; border: 2px solid; border-color: #777 #fff #fff #777; background: #efefef; padding-left: 3px; line-height: 15px; font-size: 11.500px; letter-spacing: -0.42px; }
.dots { width: 23px; height: 20px; margin-top: 1px; border: 1px solid #adadad; text-align: center; line-height: 18px; }
.group .g-acq h2 { margin-bottom: 1px; }
.ready { width: 171px; height: 30px; border: 1px solid #888; background: #000; color: #ffd800; font-weight: bold; font-size: 12px; text-align: center; line-height: 29px; }
.acts { display: flex; gap: 4px; margin: 7px 0 0 -1px; }
.acts div { width: 40px; display: flex; flex-direction: column; align-items: center; gap: 6px; letter-spacing: -0.2px; }
.acts b { width: 40px; height: 40px; border: 1px solid #adadad; outline: 1px solid #e2e2e2; outline-offset: -3px; background: #ececec; padding: 2px; }
.acts b.focus { border: 2px solid #0078d7; padding: 1px; outline: 0; background: #f0f0f0; }
.g-status h2 { margin-bottom: 6px; }
.g-edrive h2 { margin-bottom: 3px; }
.srow { display: flex; height: 20px; align-items: flex-start; line-height: 15px; letter-spacing: -0.1px; }
.srow label { width: 63px; padding-left: 3px; }
.time { width: 109px; height: 17px; background: #000; border: 2px solid; border-color: #777 #aaa #aaa #777; margin-top: -1px; }
.bar { width: 93px; height: 14px; border: 2px solid; border-color: #666 #aaa #aaa #555; background: linear-gradient(90deg, #c6c6c6, #444); color: #fff; line-height: 11px; text-align: center; }
.led { width: 12px; height: 12px; margin-left: 3px; background: #64210d; border: 2px solid #1c0a06; }
.off label { color: #888; }
.sweeps { width: 172px; display: flex; align-items: center; height: 14px; gap: 4px; margin: 3px 0 6px; }
.sweeps::before { content: ""; width: 13px; height: 1px; background: #999; }
.sweeps::after { content: ""; flex: 1; height: 1px; background: #999; }
.erow { display: flex; height: 27px; line-height: 20px; letter-spacing: -0.05px; }
.erow label { width: 76px; padding-left: 3px; }
.field { width: 57px; height: 20px; border: 1px solid #c4c4c4; outline: 1px solid #fff; outline-offset: -2px; background: #efefef; padding-left: 2px; line-height: 18px; color: #777; margin-right: 4px; }
.combo { width: 35px; height: 21px; border: 1px solid #acacac; background: #e3e3e3; padding: 0 4px; display: flex; align-items: center; justify-content: space-between; }
.combo.wide { width: 96px; background: #ccc; border-color: #bfbfbf; color: #838383; }
.check { margin: 5px 2px 0 0; }
.check + svg { margin-top: 5px; }

/* sheet tabs */
.tabs { height: 28px; display: flex; padding-top: 3px; border-bottom: 1px solid #4a8fd6; background: #efefef; font-family: "DejaVu Sans Condensed", sans-serif; font-size: 11px; color: #333; letter-spacing: -0.2px; margin-right: 1px; }
.tabs span { height: 24px; border-left: 2px solid #c8c8c8; border-top: 1px solid #c8c8c8; background: #f5f5f5; display: flex; align-items: center; gap: 3px; padding-left: 10px; flex: none; }
.tabs span svg { width: 16px; height: 16px; }
.tabs .t1 { width: 79px; border-left: 0; padding-left: 0; text-indent: -4px; }
.t2 { width: 165px; }
.t3 { width: 126px; }
.t4 { width: 137px; }
.t5 { width: 88px; }
.t6 { width: 79px; }
.t7 { width: 88px; }
.t8 { width: 88px; }
.tabs .t9 { width: 114px; height: 27px; margin-top: -2px; border: 1px solid #4a8fd6; border-bottom: 0; background: #dce9f7; font-weight: bold; padding-bottom: 1px; gap: 4px; letter-spacing: -0.25px; }
.arrows { margin: 7px 0 0 49px; }

/* workspace */
.canvas { height: 853px; margin-right: 1px; border-right: 1px solid #4a8fd6; border-bottom: 1px solid #4a8fd6; background: #9ba9b5; display: flex; padding-top: 15px; }
.strip { width: 60px; height: 836px; flex: none; background: linear-gradient(#3a89cb, #2a6293); border: solid #1c3260; border-width: 1px 1px 1px 0; }
.strip hr { width: 42px; height: 2px; background: linear-gradient(#1c3260 50%, #3c8bd0 50%); }
.strip .h1 { margin-top: 20px; }
.slab { width: 39px; height: 21px; background: #5c6770; color: #fff; }
.slab.short { width: 9px; }
.volt { margin-top: 12px; height: 20px; line-height: 14px; font-size: 12px; letter-spacing: -0.25px; text-indent: -3px; }
.strip .h2 { margin-top: 20px; }
.lcdbit { width: 5px; height: 31px; margin-top: 12px; background: #12263c; border: 2px solid #b0b0b0; border-left: 0; }
.s1, .s2, .s3 { margin-top: 7px; }
.strip .h3 { margin: 18px 0 17px; }
.ui { display: flex; align-items: center; gap: 6px; height: 24px; margin-bottom: 12px; }
.ui + hr.h4 { margin-top: 30px; }
.dot { width: 24px; height: 24px; border-radius: 50%; color: #fff; font: bold 17px/24px "DejaVu Sans", sans-serif; text-align: center; background: #00f; }
.dot.i { background: #f00; font-family: "Liberation Sans", sans-serif; font-size: 19px; }
.blackbox { width: 39px; height: 31px; margin-top: 12px; background: #000; border: solid #fff; border-width: 1px 2px 2px 0; border-top-color: #777; }
.slider { width: 39px; height: 15px; margin-top: 3px; background: #4a4a4a; border: solid #999; border-width: 1px 2px 2px 0; }
.slider i { width: 5px; height: 12px; background: #e85a00; border-right: 2px solid #5a2000; }
.bigbtn { width: 37px; height: 72px; border: solid #3c8bd0; border-width: 1px 1px 1px 0; border-radius: 0 2px 2px 0; background: linear-gradient(#e6f1fa, #9cc4e4); overflow: hidden; }
.bigbtn span { display: block; line-height: 18px; color: #111; text-indent: -1px; }
.b1 { margin-top: 8px; }
.b1 span { padding-left: 3px; }
.strip .h5, .strip .h6, .strip .h7 { margin: 20px 0 12px; }
.note { width: 39px; height: 67px; background: #fff; border: solid #777; border-width: 1px 1px 1px 0; font-style: italic; color: #555; line-height: 14px; }
.hbm { display: flex; gap: 1px; height: 34px; font-family: "Open Sans", sans-serif; font-size: 8.500px; color: #fff; }
.hbm em { line-height: 15px; }
.board { display: grid; grid-template-columns: 280px 280px 280px; grid-template-rows: 400px 416px; gap: 20px; margin-left: 72px; }
.card { background: #d3dfee; }
.card header { height: 27px; border-top: 3px solid #1c3260; background: linear-gradient(#286296, #1c3262); display: grid; grid-template-columns: 1fr auto; align-items: center; padding-right: 4px; font: bold 11px "DejaVu Sans Condensed", sans-serif; color: #fff; }
.card header b { text-align: center; padding-left: 34px; text-shadow: 1px 1px #000; letter-spacing: 0.1px; }
.listbtn { width: 30px; height: 18px; background: linear-gradient(#c9d5e5 50%, #93a5c0 50%, #c0cede); box-shadow: inset 0 0 0 1px #9fb1c9; }
.show { height: 30px; margin: 13px 10px 15px; background: #b3c0cb; display: flex; align-items: center; color: #1c3260; padding-left: 3px; }
.show label { width: 57px; letter-spacing: -0.15px; }
.pick { width: 89px; height: 21px; border: 1px solid #adadad; background: #e3e3e3; color: #000; display: flex; align-items: center; justify-content: space-between; padding: 0 4px 0 3px; letter-spacing: -0.2px; }
.pick.ro { color: #777; background: #f0f0f0; outline: 1px solid #fff; outline-offset: -2px; border-color: #ccc; padding-left: 2px; }
.show .cy { width: 43px; margin-left: 4px; }
.cyc { width: 61px; height: 20px; background: #000; color: #666; font: bold 12px/21px "DejaVu Sans Condensed", sans-serif; text-align: center; letter-spacing: 0.2px; }
.meter { height: 42px; margin: 0 10px; border: 1px solid #1c3260; background: #000; display: flex; }
.meter svg { width: 167px; height: 40px; }
.tag { width: 91px; flex: none; background: linear-gradient(#5c6871 50%, #7a8994 50%); color: #fff; font: bold 13.500px/20px "DejaVu Sans Condensed", sans-serif; padding-left: 3px; }
.tag b { display: flex; height: 20px; align-items: center; justify-content: space-between; letter-spacing: 0.7px; padding-bottom: 1px; }
.tag b + b { padding: 1px 0 0; }
.tag i { border: 4px solid transparent; border-top-color: #000; border-bottom: 0; margin: 2px 8px 0 0; }
.blue .tag { background: linear-gradient(#00f 50%, #4d6fff 50%); }
.red .tag { background: linear-gradient(#f00 50%, #ff7d66 50%); }
.green .tag { background: linear-gradient(#67a444 50%, #79b157 50%); }
.pt { width: 8px; height: 7px; margin: 1px 0 7px; background: #1c3260; clip-path: polygon(50% 0, 100% 100%, 0 100%); }
.p3 { margin-left: 206px; }
.p4 { margin-left: 234px; }
.p5 { margin-left: 262px; }

.scope { grid-column: 1 / 4; }
.scope header { grid-template-columns: 1fr auto auto; column-gap: 4px; }
.scope header b { padding-left: 68px; }
.listbtn.shut { background: linear-gradient(#d98a88 45%, #a92a28 50%, #b94440); box-shadow: inset 0 0 0 1px #c99; }
.plot { margin: 6px 0 0 3px; font: 12.500px "DejaVu Sans Condensed", sans-serif; }
.ch1 .amp { fill: #f00014; }
.ch1 .vol { fill: #0000f5; }
.ch2 .amp { fill: #c80010; }
.ch2 .vol { fill: #0a80f5; }
.ch3 .amp { fill: #96000c; }
.ch3 .vol { fill: #0f9cf5; }
.modes { display: flex; gap: 6px; margin: 3px 0 0 317px; }

/* status bar */
.status { height: 26px; flex: none; background: #1a4689; color: #fff; display: flex; align-items: center; font-family: "Open Sans", sans-serif; font-size: 11.500px; padding: 0 0 1px 6px; letter-spacing: -0.05px; }
.status i { width: 1px; height: 20px; background: #fff; }
.st1 { width: 111px; }
.st2 { width: 45px; }
.st3 { width: 84px; padding-left: 7px; letter-spacing: -0.15px; }
.ok { width: 25px; height: 22px; margin: 0 555px 0 7px; background: #e0f2c4; color: #4a9018; text-align: center; line-height: 22px; font-size: 11px; }
.q { width: 13px; height: 13px; border-radius: 50%; background: #8b9099; color: #1a4689; font-weight: bold; font-size: 10px; line-height: 13px; text-align: center; }
.dyn { width: 84px; margin: 0 0 0 4px; color: #6f88ae; }
.status .rec { padding-left: 7px; letter-spacing: -0.15px; }

/* taskbar */
.taskbar { height: 40px; flex: none; background: #080808; display: flex; align-items: center; color: #fff; }
.tray { margin-left: 620px; }
.clock { display: flex; flex-direction: column; width: 70px; text-align: center; font-family: "Open Sans", sans-serif; font-size: 12px; line-height: 18px; letter-spacing: -0.4px; }
.note-ico { margin-left: 8px; }

/* remote session window over the desktop */
.flyout { position: absolute; left: 1005px; top: 857px; }
.tv { position: absolute; left: 1029px; top: 753px; width: 251px; height: 231px; border: 1px solid #dfe7f0; font-family: "Open Sans", sans-serif; color: #222; background: #fff; display: flex; flex-direction: column; }
.tvtop { height: 60px; background: #0164cc; display: flex; align-items: center; padding: 0 0 4px 8px; flex: none; }
.brand { color: #fff; font-size: 22px; width: 158px; margin: 2px 0 0 15px; letter-spacing: -0.5px; }
.tvtop .brand + svg { margin-top: 4px; }
.tvtools { height: 43px; background: #0164cc; display: flex; gap: 18px; padding: 12px 0 0 13px; flex: none; }
.tvtools svg { width: 16px; height: 16px; }
.tvlist { flex: 1; }
.tvhead { height: 38px; display: flex; align-items: center; padding: 0 6px 8px 5px; font-size: 13.500px; }
.tvhead span { flex: 1; margin-left: 5px; letter-spacing: -0.3px; }
.tvhead .gear { margin-top: -2px; }
.tvrow { height: 24px; display: flex; align-items: center; padding: 0 10px 0 7px; font-size: 11px; }
.tvrow span { width: 145px; margin: -2px 4px 0 5px; letter-spacing: -0.25px; }
.tvrow span + svg { margin-top: -2px; }
.cur { margin-left: auto; }
.tvfoot { height: 27px; background: #404040; color: #fff; text-align: right; padding-right: 9px; font-size: 12px; line-height: 23px; letter-spacing: -0.3px; }
```
